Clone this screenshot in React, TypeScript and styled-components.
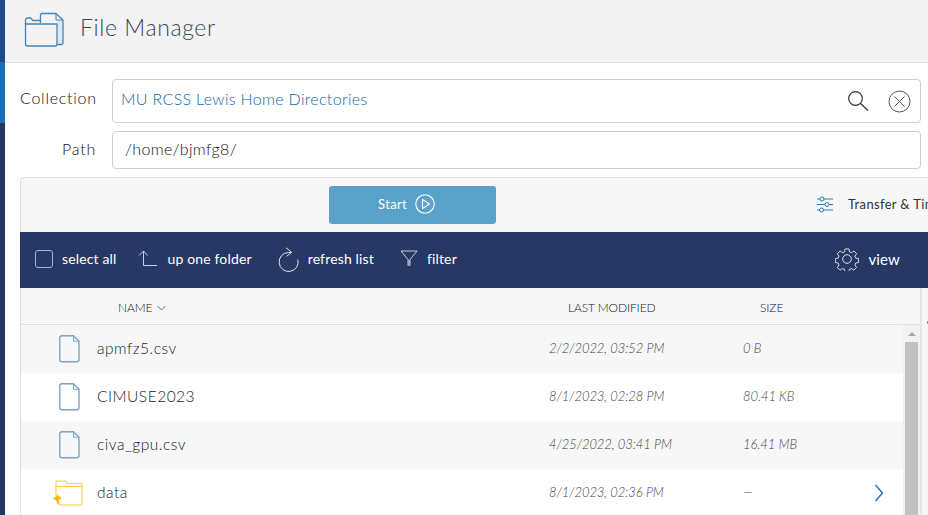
import React from "react";
import styled, { createGlobalStyle } from "styled-components";

const Global = createGlobalStyle`
  html, body { margin: 0; padding: 0; width: 928px; height: 515px; overflow: hidden; background: #fff; }
  body { font-family: "Lato", "Liberation Sans", sans-serif; color: #333; }
  * { box-sizing: border-box; }
`;

const Shell = styled.div`display:flex;width:928px;height:515px;overflow:hidden;`;
const Rail = styled.div`width:5px;flex:none;display:flex;flex-direction:column;`;
const RailPart = styled.div<{ $h?: number; $c: string }>`
  background:${p => p.$c};
  ${p => (p.$h ? `height:${p.$h}px;` : "flex:1;")}
`;
const Main = styled.div`flex:1;min-width:0;display:flex;flex-direction:column;`;
const Header = styled.header`
  height:63px;flex:none;background:#f3f3f3;border-bottom:1px solid #e0e0e6;
  display:flex;align-items:center;padding:0 0 4px 19px;gap:16px;
`;
const Title = styled.h1`margin:0 0 4px;font-size:23px;font-weight:300;color:#3c4654;letter-spacing:.6px;`;
const Form = styled.div`padding:16px 7px 0 15px;display:flex;flex-direction:column;gap:8px;`;
const Row = styled.div`display:flex;align-items:center;`;
const Label = styled.label<{ $lift: number }>`
  width:76px;text-align:right;font-size:16px;font-weight:300;color:#111;padding-bottom:${p => p.$lift}px;letter-spacing:.75px;flex:none;white-space:nowrap;
`;
const Field = styled.div<{ $h: number; $c?: string; $pad: number }>`
  margin-left:16px;flex:1;height:${p => p.$h}px;border:1px solid #ccd0d6;border-radius:4px;background:#fff;
  display:flex;align-items:center;padding:0 9px 0 ${p => p.$pad}px;font-size:16px;font-weight:300;color:${p => p.$c || "#111"};letter-spacing:.33px;
`;
const Value = styled.span<{ $lift: number }>`flex:1;padding-bottom:${p => p.$lift}px;`;
const FieldIcons = styled.div`display:flex;align-items:center;gap:19px;`;
const Panel = styled.section`
  position:relative;margin:8px 0 0 15px;flex:1;min-height:0;width:1000px;
  border:1px solid #e0e0e8;border-bottom:none;border-radius:4px 0 0 0;background:#f7f7f7;display:flex;flex-direction:column;
`;
const EdgeMark = styled.span`position:absolute;left:906px;top:143px;width:3px;height:3px;border-radius:50%;background:#2a86c2;`;
const StartBar = styled.div`height:54px;flex:none;display:flex;align-items:center;padding:0 0 1px 308px;`;
const StartButton = styled.button`
  width:167px;height:38px;border:none;border-radius:3px;background:#5aa2ca;color:#fff;font:400 13px "Lato",sans-serif;
  display:flex;align-items:center;justify-content:center;gap:8px;padding:0 12px 1px 0;letter-spacing:.3px;
`;
const Options = styled.div`
  margin-left:321px;display:flex;align-items:center;gap:15px;font-size:13px;color:#333;white-space:nowrap;letter-spacing:.35px;padding-bottom:1px;
`;
const Toolbar = styled.div`
  height:56px;flex:none;margin-left:-1px;background:#283865;color:#fff;display:flex;align-items:center;font-size:14px;letter-spacing:.15px;
  padding:0 0 3px 15px;width:908px;
`;
const Tool = styled.div<{ $ml?: number; $gap: number }>`
  display:flex;align-items:center;gap:${p => p.$gap}px;margin-left:${p => p.$ml || 0}px;
`;
const ViewTool = styled(Tool)`font-size:15px;margin-left:auto;margin-right:28px;`;
const Check = styled.span`width:18px;height:18px;border:1px solid #a9b1c4;border-radius:3px;display:block;`;
const TableArea = styled.div`width:901px;flex:1;min-height:0;display:flex;flex-direction:column;border-right:2px solid #e6e6e6;`;
const HeadRow = styled.div`
  height:37px;flex:none;display:grid;grid-template-columns:97px 450px 192px 1fr;align-items:center;border-bottom:1px solid #dedfe6;
  font-size:12px;font-weight:300;color:#111;letter-spacing:-.1px;padding-top:3px;
`;
const HeadName = styled.div`grid-column:2;display:flex;align-items:center;gap:5px;`;
const Body = styled.div`flex:1;min-height:0;display:flex;`;
const Rows = styled.div`flex:1;min-width:0;`;
const FileRow = styled.div<{ $odd: boolean }>`
  height:48px;display:grid;grid-template-columns:76px 452px 194px 1fr 40px;align-items:center;
  background:${p => (p.$odd ? "#f7f7f7" : "#fff")};
`;
const IconCell = styled.div`display:flex;justify-content:center;padding-left:21px;`;
const FileName = styled.div`font-size:15.5px;font-weight:300;color:#161a28;letter-spacing:.5px;padding-bottom:2px;`;
const Meta = styled.div`font-size:13px;font-style:italic;font-weight:300;color:#3f3f3f;letter-spacing:-.05px;padding-bottom:2px;`;
const Chevron = styled.div`display:flex;justify-content:center;padding-right:8px;`;
const Scrollbar = styled.div`width:17px;flex:none;background:#f1f1f1;display:flex;flex-direction:column;align-items:center;padding-right:2px;padding-left:2px;`;
const ScrollArrow = styled.div`width:0;height:0;margin:7px 0 6px;border-left:4px solid transparent;border-right:4px solid transparent;border-bottom:4px solid #a3a3a3;`;
const ScrollThumb = styled.div`width:13px;flex:1;background:#c1c1c1;`;

const FolderIcon = () => (
  <svg width="40" height="36" viewBox="0 0 40 36" fill="none" stroke="#4583b6" strokeWidth="1.3" strokeLinejoin="round" style={{ marginTop: 2 }}>
    <path d="M33.5 8H39V31a1.5 1.5 0 0 1-1.5 1.5H33.5z" fill="#dfe7ef" stroke="none" />
    <path d="M16.5 11V3a1.5 1.5 0 0 1 1.5-1.5h14L39 8v23a1.5 1.5 0 0 1-1.5 1.5H33.5" />
    <path d="M32 1.5V8h7" strokeWidth="1" />
    <path d="M1.5 12v20a2 2 0 0 0 2 2H31a2 2 0 0 0 2-2V12z" />
    <path d="M1.5 12V8a2 2 0 0 1 2-2h3l2.5 2.5h7.5" />
  </svg>
);
const SearchIcon = () => (
  <svg width="22" height="22" viewBox="0 0 22 22" fill="none" stroke="#333" strokeWidth="1.2">
    <circle cx="8.5" cy="8.5" r="6.8" /><path d="M13.5 13.5l7.5 7" />
  </svg>
);
const ClearIcon = () => (
  <svg width="23" height="23" viewBox="0 0 23 23" fill="none" stroke="#555" strokeWidth="1">
    <circle cx="11.5" cy="11.5" r="10.5" /><path d="M6.5 6.5l10 10M16.5 6.5l-10 10" />
  </svg>
);
const PlayIcon = () => (
  <svg width="20" height="20" viewBox="0 0 20 20" fill="none" stroke="#fff" strokeWidth="1.1" strokeLinejoin="round">
    <circle cx="10" cy="10" r="9.2" /><path d="M7.5 5.5v9l7-4.5z" />
  </svg>
);
const SlidersIcon = () => (
  <svg width="16" height="17" viewBox="0 0 16 17" fill="#f7f7f7" stroke="#2f7bb0" strokeWidth="1">
    <path d="M0 3h16M0 8.5h16M0 14h16" /><circle cx="5" cy="3" r="2" /><circle cx="10" cy="8.5" r="2" /><circle cx="4.5" cy="14" r="2" />
  </svg>
);
const UpIcon = () => (
  <svg width="20" height="17" viewBox="0 0 20 17" fill="none" stroke="#c9cede" strokeWidth="1">
    <path d="M1 5.5L5.5 1l4 4.5M5.5 1v14.5H19" />
  </svg>
);
const RefreshIcon = () => (
  <svg width="22" height="26" viewBox="0 0 22 26" fill="none" stroke="#dfe2ea" strokeWidth="1">
    <path d="M19.8 13.5A9.5 9.5 0 1 1 10.5 6.5H13" /><path d="M8 1.7L13.6 6.3 8.7 10.3" />
  </svg>
);
const FilterIcon = () => (
  <svg width="18" height="17" viewBox="0 0 18 17" strokeLinejoin="round">
    <path d="M1 1h16l-7 8.5v6H8v-6z" fill="none" stroke="#c9cede" strokeWidth="1" />
    <path d="M8 10h2v6H8z" fill="#9da5ba" />
  </svg>
);
const GearIcon = () => (
  <svg width="24" height="24" viewBox="0 0 24 24" fill="none" stroke="#e0e3ea" strokeWidth="1" strokeLinejoin="round">
    <circle cx="12" cy="12" r="4.3" />
    <path d="M10 1.5h4l.6 3.1 2 .8 2.6-1.8 2.8 2.8-1.8 2.6.8 2 3 .6v4l-3 .6-.8 2 1.7 2.6-2.8 2.8-2.6-1.7-2 .8-.6 3h-4l-.6-3-2-.8-2.6 1.7-2.8-2.8 1.7-2.6-.8-2-3-.6v-4l3-.6.8-2L2 6.4l2.8-2.8 2.6 1.8 2-.8z" transform="translate(.5 .5) scale(.96)" />
  </svg>
);
const SortIcon = () => (
  <svg width="9" height="6" viewBox="0 0 9 6" fill="none" stroke="#2f86c0" strokeWidth="1"><path d="M.5 1l4 4 4-4" /></svg>
);
const DocIcon = () => (
  <svg width="21" height="28" viewBox="0 0 21 28" fill="none" stroke="#7ba5c8" strokeWidth="1.4" strokeLinejoin="round">
    <path d="M3 .8h11.5L20 6.3V24.5a2.3 2.3 0 0 1-2.3 2.3H3A2.3 2.3 0 0 1 .8 24.5V3A2.3 2.3 0 0 1 3 .8z" />
    <path d="M14.5 1v5.3H20" strokeWidth="1" />
  </svg>
);
const DirIcon = () => (
  <svg width="30" height="27" viewBox="0 0 30 27" fill="none" stroke="#fdcf45" strokeWidth="1.2" style={{ marginLeft: -4 }}>
    <path d="M3 3.5V2a1 1 0 0 1 1-1h8.5l2 2.5H28a1 1 0 0 1 1 1V24a1 1 0 0 1-1 1H7" />
    <path d="M3 6.5h26M3 3.5V15" />
    <path d="M0 19l5-5 .5 2.5 2 0 .5 3-2.5 0 1.5 5.5-2-.5-2-4.5z" fill="#f7b714" stroke="none" />
  </svg>
);
const RightIcon = () => (
  <svg width="10" height="18" viewBox="0 0 10 18" fill="none" stroke="#2479b3" strokeWidth="1.5"><path d="M1.5 1l7 8-7 8" /></svg>
);

const files = [
  { name: "apmfz5.csv", date: "2/2/2022, 03:52 PM", size: "0 B" },
  { name: "CIMUSE2023", date: "8/1/2023, 02:28 PM", size: "80.41 KB" },
  { name: "civa_gpu.csv", date: "4/25/2022, 03:41 PM", size: "16.41 MB" },
  { name: "data", date: "8/1/2023, 02:36 PM", size: "—", dir: true },
];

export default function App() {
  return (
    <Shell>
      <Global />
      <Rail>
        <RailPart $h={62} $c="#1f4a8c" />
        <RailPart $h={61} $c="#1a6fb5" />
        <RailPart $c="#25365f" />
      </Rail>
      <Main>
        <Header><FolderIcon /><Title>File Manager</Title></Header>
        <Form>
          <Row>
            <Label $lift={7}>Collection</Label>
            <Field $h={44} $c="#14659f" $pad={8}>
              <Value $lift={5}>MU RCSS Lewis Home Directories</Value>
              <FieldIcons><SearchIcon /><ClearIcon /></FieldIcons>
            </Field>
          </Row>
          <Row>
            <Label $lift={3}>Path</Label>
            <Field $h={38} $pad={12}><Value $lift={3}>/home/bjmfg8/</Value></Field>
          </Row>
        </Form>
        <Panel>
          <StartBar>
            <StartButton>Start <PlayIcon /></StartButton>
            <Options><SlidersIcon />Transfer &amp; Timer Options</Options>
          </StartBar>
          <Toolbar>
            <Tool $gap={9}><Check />select all</Tool>
            <Tool $ml={21} $gap={10}><UpIcon />up one folder</Tool>
            <Tool $ml={26} $gap={8}><RefreshIcon />refresh list</Tool>
            <Tool $ml={26} $gap={9}><FilterIcon />filter</Tool>
            <ViewTool $gap={9}><GearIcon />view</ViewTool>
          </Toolbar>
          <TableArea>
            <HeadRow>
              <HeadName>NAME <SortIcon /></HeadName>
              <div>LAST MODIFIED</div>
              <div>SIZE</div>
            </HeadRow>
            <Body>
              <Rows>
                {files.map((f, i) => (
                  <FileRow key={f.name} $odd={i % 2 === 0}>
                    <IconCell>{f.dir ? <DirIcon /> : <DocIcon />}</IconCell>
                    <FileName>{f.name}</FileName>
                    <Meta>{f.date}</Meta>
                    <Meta>{f.size}</Meta>
                    {f.dir ? <Chevron><RightIcon /></Chevron> : <span />}
                  </FileRow>
                ))}
              </Rows>
              <Scrollbar><ScrollArrow /><ScrollThumb /></Scrollbar>
            </Body>
          </TableArea>
          <EdgeMark />
        </Panel>
      </Main>
    </Shell>
  );
}
